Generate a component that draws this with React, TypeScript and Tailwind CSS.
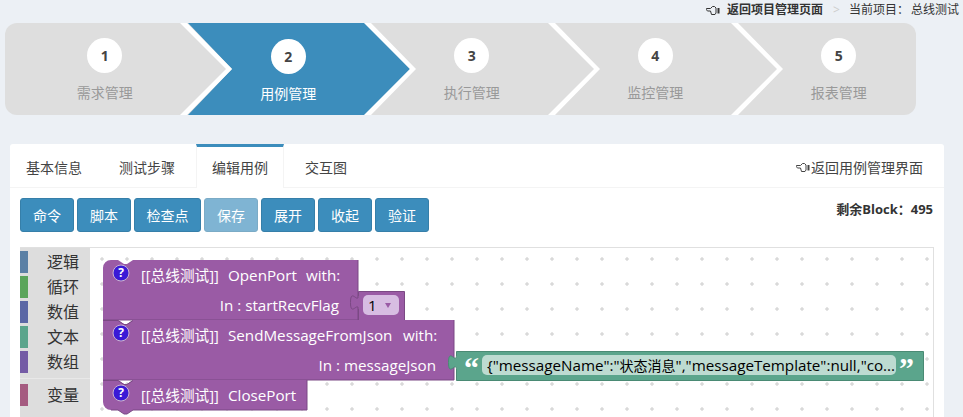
const steps = [
  { num: 1, label: '需求管理' },
  { num: 2, label: '用例管理', active: true },
  { num: 3, label: '执行管理' },
  { num: 4, label: '监控管理' },
  { num: 5, label: '报表管理' },
];

const tabs = [
  { label: '基本信息' },
  { label: '测试步骤' },
  { label: '编辑用例', active: true },
  { label: '交互图' },
];

const buttons = [
  { label: '命令', className: 'w-[54px] bg-[#3c8dbc]' },
  { label: '脚本', className: 'w-[54px] bg-[#3c8dbc]' },
  { label: '检查点', className: 'w-[67px] bg-[#3c8dbc]' },
  { label: '保存', className: 'w-[54px] bg-[#3c8dbc] opacity-65' },
  { label: '展开', className: 'w-[54px] bg-[#3c8dbc]' },
  { label: '收起', className: 'w-[54px] bg-[#3c8dbc]' },
  { label: '验证', className: 'w-[54px] bg-[#3c8dbc]' },
];

const categories = [
  { label: '逻辑', className: 'bg-[#5b80a5]' },
  { label: '循环', className: 'bg-[#5ba55b]' },
  { label: '数值', className: 'bg-[#5b67a5]' },
  { label: '文本', className: 'bg-[#5ba58c]' },
  { label: '数组', className: 'bg-[#745ba5]' },
];

// White chevrons between the wizard steps, tips measured from the left edge of the bar
const chevronTips = [227, 411, 595, 778];

const HandLeft = () => (
  <svg width="14" height="11" viewBox="0 0 14 11" fill="none" stroke="currentColor" strokeWidth="1" aria-hidden="true">
    <path d="M0.5 3.5H4.5L6.5 1.5H8.5L10 3V8L9 9.5H5.5L4.5 6H2C0.8 6 0.5 5 0.5 3.5Z" />
    <path d="M12.5 3V8.5" strokeWidth="2" />
  </svg>
);

const WizardArrows = () => (
  <svg className="absolute inset-0" width="911" height="92" viewBox="0 0 911 92" aria-hidden="true">
    <polygon points="183,0 360,0 405,46 360,92 183,92 227,46" fill="#3c8dbc" />
    {chevronTips.map((tip) => (
      <polygon
        key={tip}
        points={`${tip - 52},0 ${tip - 45},0 ${tip},46 ${tip - 45},92 ${tip - 52},92 ${tip - 6},46`}
        fill="#ffffff"
      />
    ))}
  </svg>
);

const HelpIcon = ({ cy }: { cy: number }) => (
  <g>
    <circle cx="121" cy={cy} r="8" fill="#3a1ad6" stroke="#c9b3d2" strokeWidth="1" />
    <text x="121" y={cy + 4} textAnchor="middle" className="fill-white text-[12px] font-bold">?</text>
  </g>
);

const Workspace = () => (
  <svg className="block" width="843" height="170" viewBox="90 248 843 170">
    <defs>
      <pattern id="grid" x="102" y="259" width="25" height="25" patternUnits="userSpaceOnUse">
        <path d="M0 -2V2M-2 0H2M25 -2V2M23 0H27M0 23V27M-2 25H2M25 23V27M23 25H27" stroke="#cccccc" strokeWidth="1" />
      </pattern>
    </defs>
    <rect x="90" y="248" width="843" height="170" fill="url(#grid)" />

    {/* OpenPort */}
    <path d="M103 268a8,8 0 0 1 8,-8h7l6,4h3l6,-4H358V320H103z" fill="#9a5ba5" />
    <path d="M358 260V320H103" fill="none" stroke="#7b4984" />
    <HelpIcon cy={273} />
    <text x="141" y="281" className="fill-white text-[14.67px]">[[总线测试]]</text>
    <text x="228" y="281" className="fill-white text-[15.2px]">OpenPort</text>
    <text x="306" y="281" className="fill-white text-[15.2px]">with:</text>
    <text x="339" y="311" textAnchor="end" className="fill-white text-[15.2px]">In : startRecvFlag</text>

    {/* 1 value */}
    <path d="M358.5 291.5H404.5V320.5H358.5V310c0,-10 -8,8 -8,-7.5s8,2.5 8,-7.5z" fill="#9a5ba5" stroke="#7b4984" />
    <rect x="363" y="295" width="36" height="20" rx="5" fill="#d7bde2" />
    <text x="368" y="311" className="fill-black text-[15.2px]">1</text>
    <polygon points="385,303 391,303 388,308" fill="#9a5ba5" />

    {/* SendMessageFromJson */}
    <path d="M103 320H118l6,4h3l6,-4H454V380H103z" fill="#9a5ba5" />
    <path d="M454 320V380H103" fill="none" stroke="#7b4984" />
    <path d="M103 320.5H118l6,4h3l6,-4" fill="none" stroke="#7b4984" />
    <HelpIcon cy={333} />
    <text x="141" y="341" className="fill-white text-[14.67px]">[[总线测试]]</text>
    <text x="228" y="341" className="fill-white text-[15.2px]">SendMessageFromJson</text>
    <text x="403" y="341" className="fill-white text-[15.2px]">with:</text>
    <text x="436" y="371" textAnchor="end" className="fill-white text-[15.2px]">In : messageJson</text>

    {/* message string */}
    <path d="M456.5 351.5H923.5V380.5H456.5V370c0,-10 -8,8 -8,-7.5s8,2.5 8,-7.5z" fill="#5ba58c" stroke="#4a8a74" />
    <rect x="482" y="355" width="414" height="20" rx="5" fill="#bddbd1" />
    <text x="464" y="378" className="fill-white text-[30px] font-bold font-['Liberation_Serif',serif]">“</text>
    <text x="899" y="378" className="fill-white text-[30px] font-bold font-['Liberation_Serif',serif]">”</text>
    <text x="487" y="371" className="fill-black text-[15.2px]">
      {'{"messageName":"'}
      <tspan className="text-[14px]">状态消息</tspan>
      {'","messageTemplate":null,"co...'}
    </text>

    {/* ClosePort */}
    <path d="M103 380H118l6,4h3l6,-4H307V410H133l-6,4h-3l-6,-4h-7a8,8 0 0 1 -8,-8z" fill="#9a5ba5" />
    <path d="M307 380V410H133l-6,4h-3l-6,-4h-7" fill="none" stroke="#7b4984" />
    <path d="M103 380.5H118l6,4h3l6,-4" fill="none" stroke="#7b4984" />
    <HelpIcon cy={393} />
    <text x="141" y="401" className="fill-white text-[14.67px]">[[总线测试]]</text>
    <text x="228" y="401" className="fill-white text-[15.2px]">ClosePort</text>
  </svg>
);

export default function App() {
  return (
    <div className="h-[417px] w-[963px] overflow-hidden bg-[#ecf0f5] font-['Open_Sans','Noto_Sans_CJK_SC',sans-serif] text-[#333]">
      {/* top line */}
      <div className="flex h-[23px] items-center justify-end pr-[4px] pb-[3px] text-[12px]">
        <span className="mr-[7px]"><HandLeft /></span>
        <span className="font-bold">返回项目管理页面</span>
        <span className="ml-[10px] mr-[9px] text-[#ccc]">&gt;</span>
        <span>当前项目：</span>
        <span className="ml-[2px]">总线测试</span>
      </div>

      {/* wizard */}
      <div className="relative ml-[5px] h-[92px] w-[911px] overflow-hidden rounded-xl bg-[#dedede]">
        <WizardArrows />
        <div className="relative flex pl-2">
          {steps.map((step) => (
            <div key={step.num} className="flex w-[183.5px] shrink-0 flex-col items-center pt-[15px]">
              <div className={`flex h-[35px] w-[35px] items-center justify-center rounded-full bg-white text-[14px] font-bold text-[#444] ${step.active ? 'mt-px' : ''}`}>
                {step.num}
              </div>
              <div className={`mt-[8px] text-[14px] leading-[24px] ${step.active ? 'text-white' : 'text-[#999]'}`}>{step.label}</div>
            </div>
          ))}
        </div>
      </div>

      {/* card */}
      <div className="ml-[10px] mt-[29px] h-[300px] w-[934px] rounded-t-[3px] bg-white">
        <div className="flex h-[44px] items-stretch gap-[5px] border-b border-[#f4f4f4] text-[14px] text-[#444]">
          {tabs.map((tab) => (
            <div
              key={tab.label}
              className={`flex items-center px-4 ${tab.active ? 'mb-[-1px] border-x border-t-[3px] border-[#f4f4f4] border-t-[#3c8dbc] bg-white px-[15px] pb-[1px]' : 'pt-[3px]'}`}
            >
              {tab.label}
            </div>
          ))}
          <div className="ml-auto flex items-center pr-[21px] pt-[3px]">
            <span className="mr-px"><HandLeft /></span>
            <span>返回用例管理界面</span>
          </div>
        </div>

        <div className="flex items-start justify-between pl-[10px] pr-[11px] pt-[10px]">
          <div className="flex gap-[3px]">
            {buttons.map((btn) => (
              <div
                key={btn.label}
                className={`flex h-[34px] items-center justify-center rounded-[3px] border border-[#367fa9] text-[14px] text-white ${btn.className}`}
              >
                {btn.label}
              </div>
            ))}
          </div>
          <div className="pt-[1px] text-[13px] font-bold leading-[20px]">剩余Block：495</div>
        </div>

        {/* blockly area */}
        <div className="ml-[10px] mt-[15px] flex h-[180px] w-[914px] border-r border-t border-[#e0e0e0]">
          <div className="flex w-[70px] shrink-0 flex-col bg-[#dddddd] pt-[3px] text-[16px]">
            {categories.map((cat) => (
              <div key={cat.label} className="flex h-[25px] items-start">
                <div className={`h-[22px] w-2 ${cat.className}`} />
                <span className="ml-[19px] leading-[22px]">{cat.label}</span>
              </div>
            ))}
            <div className="mb-[5px] mt-[2px] h-px bg-[#e8e8e8]" />
            <div className="flex h-[25px] items-start">
              <div className="h-[22px] w-2 bg-[#a55b80]" />
              <span className="ml-[19px] leading-[22px]">变量</span>
            </div>
          </div>
          <Workspace />
        </div>
      </div>
    </div>
  );
}
